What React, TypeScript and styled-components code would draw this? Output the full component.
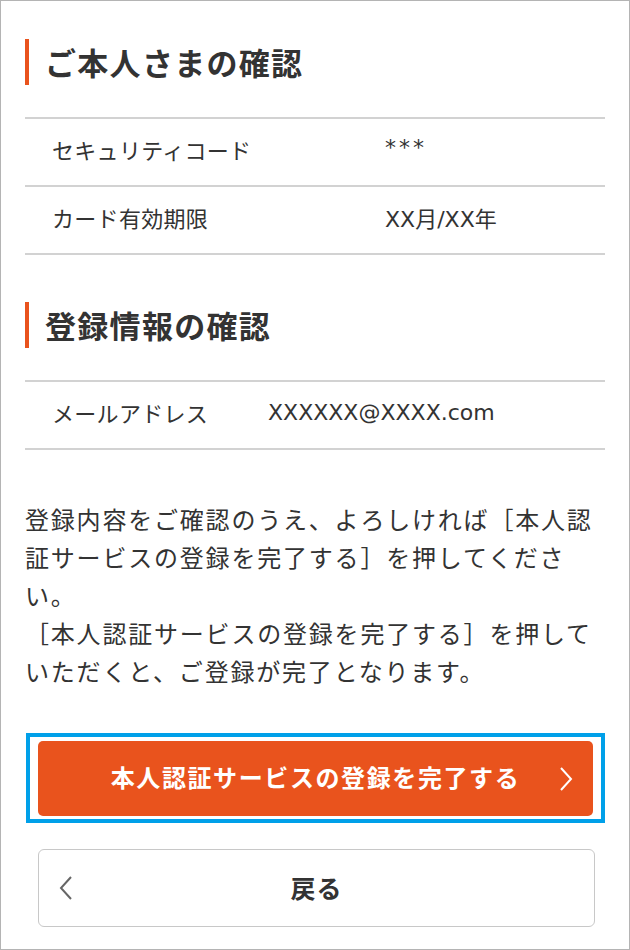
import styled, { createGlobalStyle } from "styled-components";

const GlobalStyle = createGlobalStyle`
  *, *::before, *::after {
    box-sizing: border-box;
  }
  html, body {
    margin: 0;
    padding: 0;
    background: #fff;
  }
  body {
    font-family: "Noto Sans CJK JP", "Noto Sans", sans-serif;
    color: #333;
  }
`;

type Row = { label: string; value: string; masked?: boolean };

const identityRows: Row[] = [
  { label: "セキュリティコード", value: "***", masked: true },
  { label: "カード有効期限", value: "XX月/XX年" },
];

const registrationRows: Row[] = [
  { label: "メールアドレス", value: "XXXXXX@XXXX.com" },
];

function ChevronRight() {
  return (
    <svg width="14" height="26" viewBox="0 0 14 26" fill="none">
      <path d="M2 2 L12 13 L2 24" stroke="#fff" strokeWidth="2" />
    </svg>
  );
}

function ChevronLeft() {
  return (
    <svg width="14" height="26" viewBox="0 0 14 26" fill="none">
      <path d="M12 2 L2 13 L12 24" stroke="#666" strokeWidth="2" />
    </svg>
  );
}

function InfoTable({ rows, labelWidth }: { rows: Row[]; labelWidth: number }) {
  return (
    <StyledTable>
      {rows.map((row) => (
        <StyledRow key={row.label} $labelWidth={labelWidth}>
          <span>{row.label}</span>
          <StyledValue $masked={row.masked}>{row.value}</StyledValue>
        </StyledRow>
      ))}
    </StyledTable>
  );
}

export default function App() {
  return (
    <>
      <GlobalStyle />
      <StyledFrame>
        <StyledHeading>ご本人さまの確認</StyledHeading>
        <InfoTable rows={identityRows} labelWidth={333} />

        <StyledHeading $top={47}>登録情報の確認</StyledHeading>
        <InfoTable rows={registrationRows} labelWidth={216} />

        <StyledNote>
          登録内容をご確認のうえ、よろしければ［本人認証サービスの登録を完了する］を押してください。
          <br />
          ［本人認証サービスの登録を完了する］を押していただくと、ご登録が完了となります。
        </StyledNote>

        <StyledFocusRing>
          <StyledPrimaryButton type="button">
            本人認証サービスの登録を完了する
            <StyledIcon $side="right">
              <ChevronRight />
            </StyledIcon>
          </StyledPrimaryButton>
        </StyledFocusRing>

        <StyledBackButton type="button">
          <StyledIcon $side="left">
            <ChevronLeft />
          </StyledIcon>
          戻る
        </StyledBackButton>
      </StyledFrame>
    </>
  );
}

const StyledFrame = styled.div`
  width: 630px;
  height: 950px;
  border: 1px solid #b4b4b4;
  padding: 38px 24px 0 24px;
  display: flex;
  flex-direction: column;
  overflow: hidden;
`;

const StyledHeading = styled.h2<{ $top?: number }>`
  margin: ${(p) => p.$top ?? 0}px 0 0 0;
  border-left: 4px solid #e9531d;
  padding: 0 0 2px 16px;
  height: 46px;
  display: flex;
  align-items: center;
  font-size: 31px;
  font-weight: 700;
  letter-spacing: 1.3px;
  color: #333;
`;

const StyledTable = styled.div`
  margin-top: 32px;
  border-top: 2px solid #d2d2d2;
`;

const StyledRow = styled.div<{ $labelWidth: number }>`
  display: grid;
  grid-template-columns: ${(p) => p.$labelWidth}px 1fr;
  align-items: center;
  height: 68px;
  padding: 0 0 6px 27px;
  border-bottom: 2px solid #d2d2d2;
  font-size: 22px;
  letter-spacing: 0.3px;
  color: #333;
`;

const StyledValue = styled.span<{ $masked?: boolean }>`
  font-family: "DejaVu Sans", "Noto Sans CJK JP", sans-serif;
  letter-spacing: ${(p) => (p.$masked ? "3px" : "0")};
  ${(p) => (p.$masked ? "padding-bottom: 4px;" : "")}
`;

const StyledNote = styled.p`
  margin: 50px 0 0 0;
  font-size: 24px;
  line-height: 38px;
  letter-spacing: 1.8px;
  color: #333;
  line-break: strict;
`;

const StyledFocusRing = styled.div`
  margin-top: 43px;
  margin-left: 1px;
  border: 4px solid #00a0e9;
  padding: 4px 8px 3px 8px;
`;

const StyledPrimaryButton = styled.button`
  position: relative;
  width: 100%;
  height: 75px;
  padding: 0 0 4px 0;
  border: none;
  border-radius: 5px;
  background: #e9531d;
  color: #fff;
  font-family: inherit;
  font-size: 24px;
  font-weight: 700;
  letter-spacing: 1.6px;
  cursor: pointer;
`;

const StyledBackButton = styled.button`
  position: relative;
  margin: 26px 10px 0 13px;
  height: 78px;
  padding: 0 0 2px 0;
  border: 1.5px solid #c8c8c8;
  border-radius: 6px;
  background: #fff;
  color: #333;
  font-family: inherit;
  font-size: 25px;
  font-weight: 700;
  letter-spacing: 1px;
  cursor: pointer;
`;

const StyledIcon = styled.span<{ $side: "left" | "right" }>`
  position: absolute;
  top: 50%;
  ${(p) => (p.$side === "right" ? "right: 20px;" : "left: 20px;")}
  transform: translateY(-50%);
  display: flex;
`;
